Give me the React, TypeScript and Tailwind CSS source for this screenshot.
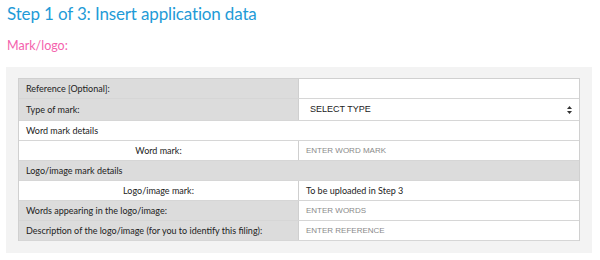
import React from 'react';

const placeholder = "text-[8px] text-[#8a8a8a] font-['Liberation_Sans',sans-serif]";

const Row = ({
  gray = true,
  center = false,
  h = "h-[20px]",
  label,
  children,
}: {
  gray?: boolean;
  center?: boolean;
  h?: string;
  label: string;
  children?: React.ReactNode;
}) => (
  <div className={`grid grid-cols-[280px_1fr] ${h} border-b border-[#d6d6d6]`}>
    <div
      className={`flex items-center px-[7px] border-r border-[#cfcfcf] whitespace-nowrap ${
        gray ? "bg-[#dcdcdc]" : "bg-white"
      } ${center ? "justify-center" : ""}`}
    >
      {label}
    </div>
    <div className="flex items-center px-[7px] bg-white">{children}</div>
  </div>
);

const SectionRow = ({ gray, label }: { gray?: boolean; label: string }) => (
  <div
    className={`h-[20px] flex items-center px-[7px] border-b border-[#d6d6d6] ${
      gray ? "bg-[#dcdcdc]" : "bg-white"
    }`}
  >
    {label}
  </div>
);

export default function App() {
  return (
    <div className="w-[600px] h-[260px] bg-white font-['Lato',sans-serif] text-[#222]">
      <h1 className="px-[7px] pt-[3px] text-[17px] leading-[22px] tracking-[-0.15px] text-[#1f9bd7]">
        Step 1 of 3: Insert application data
      </h1>
      <h2 className="px-[7px] mt-[13px] text-[12.5px] leading-[16px] text-[#f462ad]">Mark/logo:</h2>
      <div className="ml-[6px] mt-[13px] w-[586px] bg-[#f3f3f3] px-[12px] pt-[11px] pb-[12px]">
        <div className="border border-[#d0d0d0] border-b-0 text-[9px] bg-white">
          <Row label="Reference [Optional]:" />
          <Row label="Type of mark:" h="h-[22px]">
            <div className="flex flex-1 items-center justify-between pl-[4px] text-[9px] text-[#222] font-['Liberation_Sans',sans-serif]">
              <span>SELECT TYPE</span>
              <svg width="5" height="8" viewBox="0 0 5 8" className="fill-[#333]">
                <path d="M2.5 0L5 3H0z" />
                <path d="M2.5 8L0 5H5z" />
              </svg>
            </div>
          </Row>
          <SectionRow label="Word mark details" />
          <Row gray={false} center label="Word mark:">
            <span className={placeholder}>ENTER WORD MARK</span>
          </Row>
          <SectionRow gray label="Logo/image mark details" />
          <Row gray={false} center label="Logo/image mark:">
            <span>To be uploaded in Step 3</span>
          </Row>
          <Row label="Words appearing in the logo/image:">
            <span className={placeholder}>ENTER WORDS</span>
          </Row>
          <Row label="Description of the logo/image (for you to identify this filing):">
            <span className={placeholder}>ENTER REFERENCE</span>
          </Row>
        </div>
      </div>
    </div>
  );
}
